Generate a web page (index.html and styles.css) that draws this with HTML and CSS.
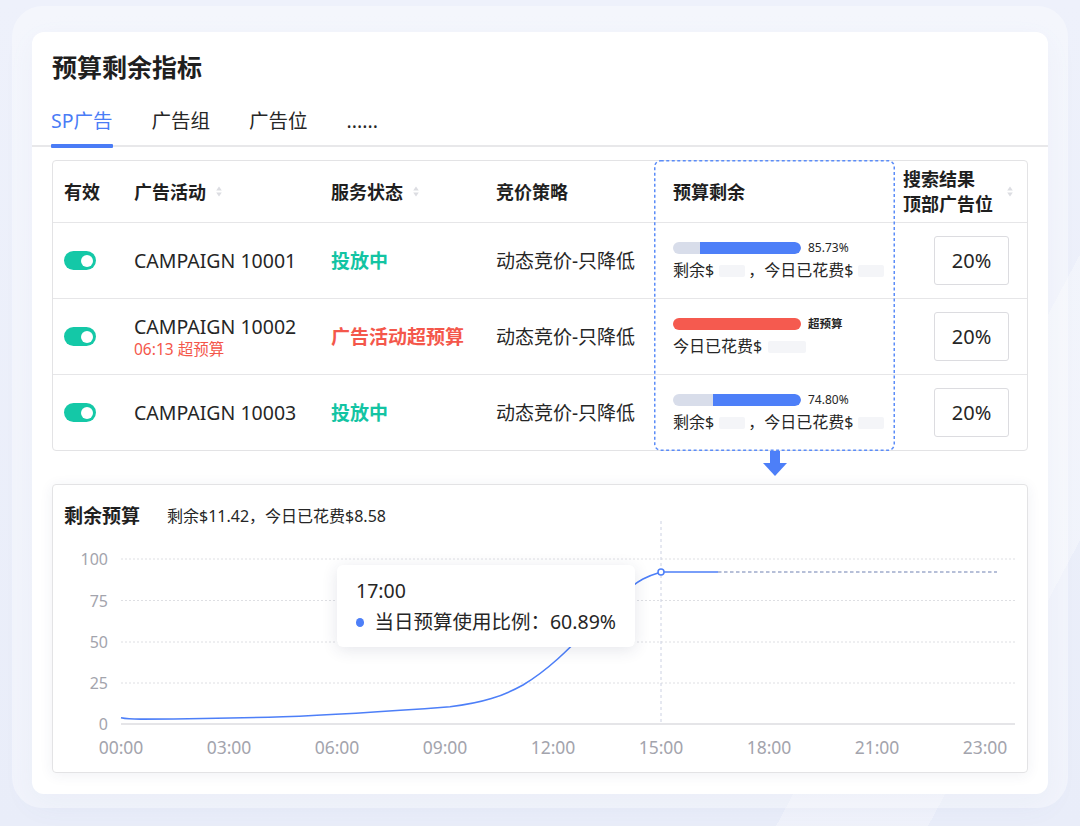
FILE: index.html
```html
<!DOCTYPE html>
<html lang="zh-CN">
<head>
<meta charset="utf-8">
<title>预算剩余指标</title>
<link rel="stylesheet" href="styles.css">
</head>
<body>
<main class="panel">
  <h1 class="title">预算剩余指标</h1>
  <nav class="tabs">
    <span class="tab active">SP广告</span>
    <span class="tab">广告组</span>
    <span class="tab">广告位</span>
    <span class="tab">......</span>
  </nav>

  <section class="table-wrap">
    <div class="table">
      <div class="row head">
        <div class="cell c1">有效</div>
        <div class="cell c2">广告活动<svg class="sorter" viewBox="0 0 6 11" width="6" height="11"><path d="M3 0.5 L5.8 4.6 L0.2 4.6 Z M0.2 6.4 L5.8 6.4 L3 10.5 Z"/></svg></div>
        <div class="cell c3">服务状态<svg class="sorter" viewBox="0 0 6 11" width="6" height="11"><path d="M3 0.5 L5.8 4.6 L0.2 4.6 Z M0.2 6.4 L5.8 6.4 L3 10.5 Z"/></svg></div>
        <div class="cell c4">竞价策略</div>
        <div class="cell c5">预算剩余</div>
        <div class="cell c6 head-last"><span>搜索结果<br>顶部广告位</span><svg class="sorter" viewBox="0 0 6 11" width="6" height="11"><path d="M3 0.5 L5.8 4.6 L0.2 4.6 Z M0.2 6.4 L5.8 6.4 L3 10.5 Z"/></svg></div>
      </div>

      <div class="row">
        <div class="cell c1"><span class="switch"></span></div>
        <div class="cell c2"><span class="camp">CAMPAIGN 10001</span></div>
        <div class="cell c3"><span class="status">投放中</span></div>
        <div class="cell c4">动态竞价-只降低</div>
        <div class="cell c5">
          <div class="budget">
            <div class="bar-line"><div class="bar"><div class="fill" style="width:79%"></div></div><span class="pct">85.73%</span></div>
            <div class="money">剩余$<span class="ph"></span>，今日已花费$<span class="ph"></span></div>
          </div>
        </div>
        <div class="cell c6"><div class="rate">20%</div></div>
      </div>

      <div class="row">
        <div class="cell c1"><span class="switch"></span></div>
        <div class="cell c2"><div class="camp-block"><span class="camp">CAMPAIGN 10002</span><span class="camp-sub">06:13 超预算</span></div></div>
        <div class="cell c3"><span class="status over">广告活动超预算</span></div>
        <div class="cell c4">动态竞价-只降低</div>
        <div class="cell c5">
          <div class="budget">
            <div class="bar-line"><div class="bar bar-over"></div><span class="pct pct-over">超预算</span></div>
            <div class="money">今日已花费$<span class="ph ph-wide"></span></div>
          </div>
        </div>
        <div class="cell c6"><div class="rate">20%</div></div>
      </div>

      <div class="row">
        <div class="cell c1"><span class="switch"></span></div>
        <div class="cell c2"><span class="camp">CAMPAIGN 10003</span></div>
        <div class="cell c3"><span class="status">投放中</span></div>
        <div class="cell c4">动态竞价-只降低</div>
        <div class="cell c5">
          <div class="budget">
            <div class="bar-line"><div class="bar"><div class="fill" style="width:69%"></div></div><span class="pct">74.80%</span></div>
            <div class="money">剩余$<span class="ph"></span>，今日已花费$<span class="ph"></span></div>
          </div>
        </div>
        <div class="cell c6"><div class="rate">20%</div></div>
      </div>
    </div>

    <svg class="highlight" width="241" height="291" viewBox="0 0 241 291">
      <rect x="0.75" y="0.75" width="239.5" height="289.5" rx="6" ry="6"/>
    </svg>
    <svg class="down-arrow" width="24" height="25" viewBox="0 0 24 25">
      <rect x="7" y="0" width="10" height="12.5"/>
      <path d="M0 12 L24 12 L12 25 Z"/>
    </svg>
  </section>

  <section class="chart-card">
    <header class="chart-head">
      <h2 class="chart-title">剩余预算</h2>
      <span class="chart-info">剩余$11.42，今日已花费$8.58</span>
    </header>
    <svg class="chart" width="974" height="245" viewBox="0 0 974 245">
      <g class="grid">
        <line x1="68" y1="32" x2="962" y2="32"/>
        <line x1="68" y1="73.5" x2="962" y2="73.5"/>
        <line x1="68" y1="115" x2="962" y2="115"/>
        <line x1="68" y1="156" x2="962" y2="156"/>
      </g>
      <line class="axis" x1="68" y1="197" x2="962" y2="197"/>
      <g class="ylab">
        <text x="55" y="32">100</text>
        <text x="55" y="74">75</text>
        <text x="55" y="115">50</text>
        <text x="55" y="156">25</text>
        <text x="55" y="197">0</text>
      </g>
      <g class="xlab">
        <text x="68" y="220">00:00</text>
        <text x="176" y="220">03:00</text>
        <text x="284" y="220">06:00</text>
        <text x="392" y="220">09:00</text>
        <text x="500" y="220">12:00</text>
        <text x="608" y="220">15:00</text>
        <text x="716" y="220">18:00</text>
        <text x="824" y="220">21:00</text>
        <text x="932" y="220">23:00</text>
      </g>
      <line class="vline" x1="608" y1="-6" x2="608" y2="197"/>
      <path class="curve" d="M68,190.7 C74,192 80,192.2 90,192.1 C140,191.8 190,191 230,189.7 C280,188 340,184 397,179.7 C430,176 450,169 470,158 C495,143 515,123 535,102 C555,80 575,60 590,52 C598,48 603,46.5 608,45 L665,45"/>
      <line class="forecast" x1="665" y1="45" x2="944" y2="45"/>
      <circle class="dot" cx="608" cy="45" r="3"/>
    </svg>
    <div class="tooltip">
      <div class="tip-time">17:00</div>
      <div class="tip-row"><span class="tip-dot"></span>当日预算使用比例：60.89%</div>
    </div>
  </section>
</main>
</body>
</html>
```
FILE: styles.css
```css
* {
  box-sizing: border-box;
  margin: 0;
  padding: 0;
}

html,
body {
  width: 1080px;
  height: 826px;
  overflow: hidden;
}

body {
  padding: 32px;
  font-family: "Noto Sans", "Noto Sans CJK SC", sans-serif;
  color: #262626;
  background:
    linear-gradient(118deg, transparent 0 80%, rgba(255, 255, 255, 0.3) 80% 90%, transparent 90%),
    linear-gradient(180deg, #eef1fb 0%, #e9edf9 100%);
}

.panel {
  background: #fff;
  border-radius: 12px;
  padding: 18px 0 21px;
  box-shadow: 0 -6px 0 20px rgba(255, 255, 255, 0.38), 0 8px 30px rgba(90, 110, 180, 0.08);
}

.title {
  padding: 0 20px;
  font-size: 25px;
  line-height: 34px;
  font-weight: 700;
  color: #1f1f1f;
}

.tabs {
  display: flex;
  gap: 39px;
  margin-top: 24px;
  padding: 0 19px;
  border-bottom: 2px solid #e8e8ea;
}

.tab {
  position: relative;
  font-size: 19.5px;
  line-height: 26px;
  padding-bottom: 11px;
  color: #262626;
}

.tab.active {
  color: #4a7cf6;
}

.tab.active::after {
  content: "";
  position: absolute;
  left: 0;
  right: 0;
  bottom: -3px;
  height: 4px;
  background: #4a7cf6;
  border-radius: 1px;
}

/* table */
.table-wrap {
  position: relative;
  margin: 13px 20px 0;
}

.table {
  border: 1px solid #e3e3e5;
  border-radius: 4px;
}

.row {
  display: grid;
  grid-template-columns: 69px 197px 165px 172px 239px 132px;
  height: 76px;
  border-top: 1px solid #e6e6e8;
  font-size: 19px;
  color: #262626;
}

.row.head {
  height: 61px;
  border-top: 0;
  font-size: 18px;
  font-weight: 700;
  color: #1f1f1f;
}

.cell {
  display: flex;
  align-items: center;
  padding-left: 12px;
  line-height: 24px;
}

.c1 {
  padding-left: 11px;
}

.c5 {
  padding-left: 17px;
}

.c6 {
  padding-left: 8px;
  justify-content: flex-end;
  padding-right: 18px;
}

.head-last {
  justify-content: space-between;
  padding-right: 14px;
  line-height: 25px;
}

.sorter {
  fill: #dcdde2;
  margin-left: 10px;
}

.switch {
  position: relative;
  width: 32px;
  height: 19px;
  border-radius: 10px;
  background: #14c8a7;
}

.switch::after {
  content: "";
  position: absolute;
  right: 3px;
  top: 3.5px;
  width: 12px;
  height: 12px;
  border-radius: 50%;
  background: #fff;
}

.camp {
  font-size: 19.5px;
  color: #262626;
}

.camp-block {
  display: flex;
  flex-direction: column;
}

.camp-block .camp {
  line-height: 24px;
}

.camp-sub {
  font-size: 15.5px;
  line-height: 20px;
  color: #f4574b;
}

.status {
  font-weight: 700;
  color: #13c4a3;
}

.status.over {
  color: #f4574b;
}

.budget {
  display: flex;
  flex-direction: column;
  gap: 4px;
}

.bar-line {
  display: flex;
  align-items: center;
  height: 14px;
}

.bar {
  display: flex;
  justify-content: flex-end;
  width: 128px;
  height: 12px;
  border-radius: 6px;
  background: #d8ddea;
  overflow: hidden;
}

.fill {
  height: 100%;
  background: #4d7ff8;
  border-radius: 0 6px 6px 0;
}

.bar-over {
  background: #f55a4f;
}

.pct {
  margin-left: 7px;
  font-size: 12px;
  line-height: 14px;
  color: #262626;
}

.pct-over {
  font-weight: 700;
  font-size: 11.5px;
}

.money {
  font-size: 16px;
  line-height: 22px;
  color: #262626;
  white-space: nowrap;
}

.ph {
  display: inline-block;
  width: 26px;
  height: 12px;
  margin: 0 3px 0 5px;
  border-radius: 2px;
  background: #f4f5f8;
  vertical-align: middle;
}

.ph-wide {
  width: 38px;
  margin-left: 6px;
}

.rate {
  display: flex;
  align-items: center;
  justify-content: center;
  width: 75px;
  height: 49px;
  border: 1px solid #dcdce0;
  border-radius: 3px;
  font-size: 20px;
  color: #262626;
}

.highlight {
  position: absolute;
  left: 602px;
  top: 0;
}

.highlight rect {
  fill: none;
  stroke: #5b8cf8;
  stroke-width: 1.5;
  stroke-dasharray: 3 2.5;
}

.down-arrow {
  position: absolute;
  left: 711px;
  top: 100%;
  fill: #4d7ff8;
}

/* chart */
.chart-card {
  position: relative;
  margin: 33px 20px 0;
  border: 1px solid #e3e3e5;
  border-radius: 4px;
  box-shadow: 0 2px 14px rgba(40, 60, 120, 0.07);
}

.chart-head {
  display: flex;
  align-items: center;
  padding: 20px 11px 0;
  height: 42px;
}

.chart-title {
  font-size: 19px;
  line-height: 22px;
  font-weight: 700;
  color: #1f1f1f;
  margin-right: 27px;
}

.chart-info {
  font-size: 16px;
  line-height: 22px;
  color: #262626;
}

.chart {
  display: block;
  overflow: visible;
}

.grid line {
  stroke: #dedfe3;
  stroke-width: 1;
  stroke-dasharray: 2 2;
}

.axis {
  stroke: #dcdde1;
  stroke-width: 1.5;
}

.ylab text {
  font-family: "Noto Sans", sans-serif;
  font-size: 16px;
  fill: #a3a4ad;
  text-anchor: end;
  dominant-baseline: central;
}

.xlab text {
  font-family: "Noto Sans", sans-serif;
  font-size: 17.5px;
  fill: #a3a4ad;
  text-anchor: middle;
  dominant-baseline: central;
}

.vline {
  stroke: #ccd1e2;
  stroke-width: 1;
  stroke-dasharray: 3 3;
}

.curve {
  fill: none;
  stroke: #4d7ff8;
  stroke-width: 1.6;
}

.forecast {
  stroke: #9eabcb;
  stroke-width: 1.5;
  stroke-dasharray: 3.5 2.5;
}

.dot {
  fill: #fff;
  stroke: #4d7ff8;
  stroke-width: 1.5;
}

.tooltip {
  position: absolute;
  left: 284px;
  top: 80px;
  width: 298px;
  height: 82px;
  padding: 12px 19px 0;
  background: #fff;
  border-radius: 6px;
  box-shadow: 0 3px 16px rgba(40, 50, 90, 0.12);
}

.tip-time {
  font-size: 19.5px;
  line-height: 28px;
  color: #262626;
}

.tip-row {
  display: flex;
  align-items: center;
  margin-top: 3px;
  font-size: 19.5px;
  line-height: 28px;
  color: #262626;
  white-space: nowrap;
}

.tip-dot {
  width: 9px;
  height: 9px;
  margin-right: 10px;
  border-radius: 50%;
  background: #4d7ff8;
}
```
